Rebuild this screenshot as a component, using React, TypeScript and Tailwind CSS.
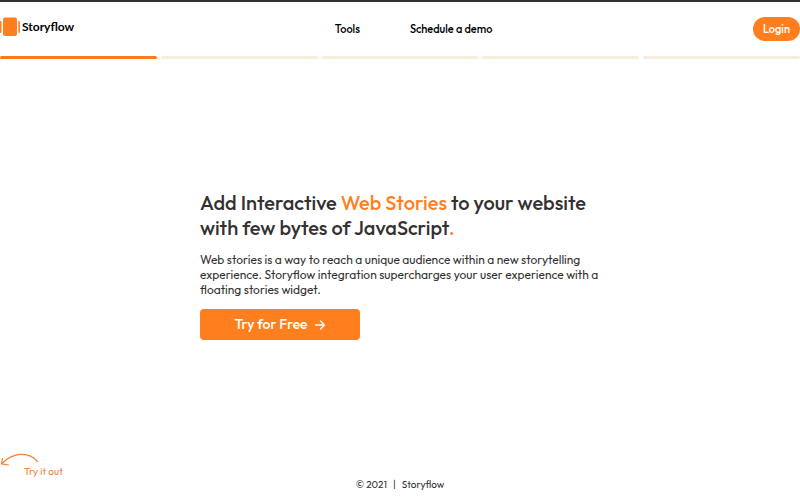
import clsx from 'clsx';

const STEPS = 5;

export default function App() {
  return (
    <div className="relative min-h-screen flex flex-col bg-white border-t-2 border-[#333132] font-['Outfit','Lato',sans-serif] text-[#333132]">
      <Header />
      <StoryProgress active={0} />

      <main className="flex-1 flex flex-col items-center justify-center px-4 pb-1.5">
        <div className="w-full max-w-[400px]">
          <h1 className="text-[20px] leading-[25px] font-medium">
            Add Interactive <span className="text-[#ff7f1f]">Web Stories</span> to your website
            with few bytes of JavaScript<span className="text-[#ff7f1f]">.</span>
          </h1>
          <p className="mt-3 text-[12px] leading-[15px]">
            Web stories is a way to reach a unique audience within a new storytelling
            experience. Storyflow integration supercharges your user experience with a
            floating stories widget.
          </p>
          <button
            type="button"
            className="mt-3 w-40 h-[31px] flex items-center justify-center gap-1.5 rounded-sm bg-[#ff7f1f] text-white text-[14px] font-medium"
          >
            Try for Free
            <ArrowRight />
          </button>
        </div>
      </main>

      <footer className="pb-2 flex justify-center gap-1.5 text-[10px] leading-[15px]">
        <span>© 2021</span>
        <span>|</span>
        <span>Storyflow</span>
      </footer>

      <TryItOut />
    </div>
  );
}

function Header() {
  return (
    <header className="h-[54px] flex items-center justify-between">
      <a href="#" className="pb-1 flex items-center gap-0.5 text-black">
        <Logo />
        <span className="font-[Lato,sans-serif] text-[12px] leading-5 font-bold">Storyflow</span>
      </a>
      <nav className="flex gap-[50px] text-[11px] leading-4 font-medium text-black">
        <a href="#tools">Tools</a>
        <a href="#demo">Schedule a demo</a>
      </nav>
      <button
        type="button"
        className="h-6 px-2.5 rounded-full bg-[#ff7f1f] text-white text-[11px] font-medium"
      >
        Login
      </button>
    </header>
  );
}

// Segmented bar like the one on top of a story
function StoryProgress({ active }: { active: number }) {
  return (
    <div className="flex gap-1">
      {Array.from({ length: STEPS }, (_, i) => (
        <div
          key={i}
          className={clsx('h-[3px] flex-1 rounded-full', i <= active ? 'bg-[#f77c20]' : 'bg-[#f8ecdf]')}
        />
      ))}
    </div>
  );
}

function TryItOut() {
  return (
    <div className="absolute left-0 bottom-[22px] flex items-end text-[#f2813a]">
      <svg width="40" height="26" viewBox="0 0 40 26" fill="none" stroke="currentColor" strokeWidth="1.2" strokeLinecap="round" strokeLinejoin="round">
        <path d="M37.500 9.500C28-1.500 12 1 2 11.500" />
        <path d="M2.500 6.500L1.500 11.800L8.500 13" />
      </svg>
      <span className="-ml-4 text-[10px] leading-3">Try it out</span>
    </div>
  );
}

const Logo = () => (
  <svg width="20" height="20" viewBox="0 0 20 20" fill="#ff7f1f">
    <rect x="-2" y="4" width="3.500" height="12" rx="1" />
    <rect x="3" y="0.500" width="14" height="18.500" rx="2" />
    <rect x="18.300" y="4" width="1.600" height="12" rx="0.800" />
  </svg>
);

const ArrowRight = () => (
  <svg width="12" height="12" viewBox="0 0 12 12" fill="none" stroke="currentColor" strokeWidth="1.300" strokeLinecap="round" strokeLinejoin="round">
    <path d="M1.500 6H10.500M6.500 2L10.500 6L6.500 10" />
  </svg>
);
